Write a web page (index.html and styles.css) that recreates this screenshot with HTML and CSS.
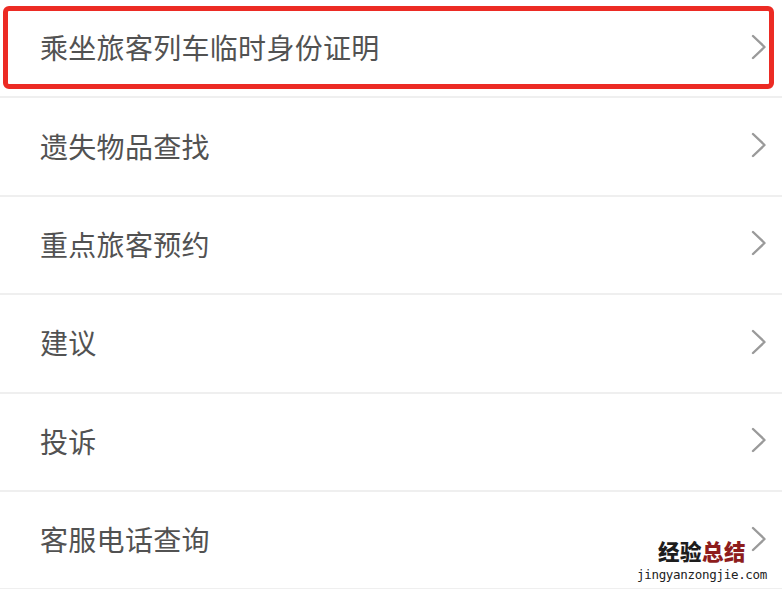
FILE: index.html
```html
<!DOCTYPE html>
<html lang="zh-CN">
<head>
<meta charset="utf-8">
<title>服务列表</title>
<link rel="stylesheet" href="styles.css">
</head>
<body>
<div class="page">
  <ul class="menu">
    <li class="row highlighted">
      <span class="label">乘坐旅客列车临时身份证明</span>
      <svg class="chev" viewBox="0 0 16 26" width="16" height="26"><path d="M2 2 L13.5 13 L2 24" fill="none" stroke="#9a9a9a" stroke-width="2.4" stroke-linecap="round" stroke-linejoin="round"/></svg>
      <div class="redbox"></div>
    </li>
    <li class="row">
      <span class="label">遗失物品查找</span>
      <svg class="chev" viewBox="0 0 16 26" width="16" height="26"><path d="M2 2 L13.5 13 L2 24" fill="none" stroke="#9a9a9a" stroke-width="2.4" stroke-linecap="round" stroke-linejoin="round"/></svg>
    </li>
    <li class="row">
      <span class="label">重点旅客预约</span>
      <svg class="chev" viewBox="0 0 16 26" width="16" height="26"><path d="M2 2 L13.5 13 L2 24" fill="none" stroke="#9a9a9a" stroke-width="2.4" stroke-linecap="round" stroke-linejoin="round"/></svg>
    </li>
    <li class="row">
      <span class="label">建议</span>
      <svg class="chev" viewBox="0 0 16 26" width="16" height="26"><path d="M2 2 L13.5 13 L2 24" fill="none" stroke="#9a9a9a" stroke-width="2.4" stroke-linecap="round" stroke-linejoin="round"/></svg>
    </li>
    <li class="row">
      <span class="label">投诉</span>
      <svg class="chev" viewBox="0 0 16 26" width="16" height="26"><path d="M2 2 L13.5 13 L2 24" fill="none" stroke="#9a9a9a" stroke-width="2.4" stroke-linecap="round" stroke-linejoin="round"/></svg>
    </li>
    <li class="row">
      <span class="label">客服电话查询</span>
      <svg class="chev" viewBox="0 0 16 26" width="16" height="26"><path d="M2 2 L13.5 13 L2 24" fill="none" stroke="#9a9a9a" stroke-width="2.4" stroke-linecap="round" stroke-linejoin="round"/></svg>
    </li>
  </ul>
  <div class="watermark">
    <div class="wm-title"><span class="wm-dark">经验</span><span class="wm-red">总结</span></div>
    <div class="wm-url">jingyanzongjie.com</div>
  </div>
</div>
</body>
</html>
```
FILE: styles.css
```css
html, body {
  margin: 0;
  padding: 0;
  background: #ffffff;
}
.page {
  position: relative;
  width: 782px;
  height: 589px;
  overflow: hidden;
  font-family: "Noto Sans CJK SC", "Noto Sans", sans-serif;
}
.menu {
  list-style: none;
  margin: 0;
  padding: 0;
}
.row {
  position: relative;
  box-sizing: border-box;
  height: 98.4px;
  border-bottom: 2px solid #efefef;
  display: flex;
  align-items: center;
  justify-content: space-between;
  padding: 0 15px 0 40px;
}
.label {
  font-size: 28px;
  color: #525252;
  letter-spacing: 0.3px;
  line-height: 1;
  margin-top: -2px;
}
.chev {
  display: block;
  margin-top: -3px;
}
.redbox {
  position: absolute;
  left: 3px;
  top: 6px;
  width: 771px;
  height: 83px;
  box-sizing: border-box;
  border: 5px solid #ec2b24;
  border-radius: 6px;
}
.watermark {
  position: absolute;
  left: 632px;
  top: 535px;
  width: 140px;
  display: flex;
  flex-direction: column;
  align-items: center;
  gap: 1px;
}
.wm-title {
  font-family: "Noto Sans CJK SC", sans-serif;
  font-weight: 900;
  font-size: 21.5px;
  line-height: normal;
  letter-spacing: 0.5px;
}
.wm-dark { color: #1d1d1d; }
.wm-red { color: #8e1c1c; }
.wm-url {
  font-family: "DejaVu Sans Mono", monospace;
  font-size: 12.5px;
  line-height: normal;
  color: #222222;
  letter-spacing: -0.3px;
}
```
